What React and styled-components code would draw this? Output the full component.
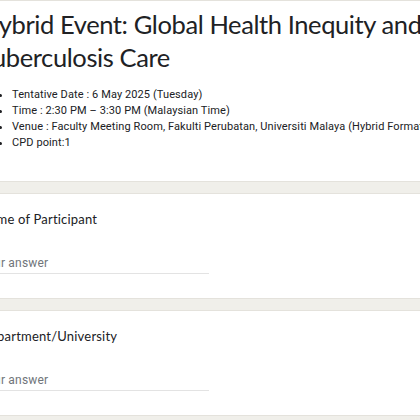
import React from "react";
import styled, { createGlobalStyle } from "styled-components";

const Global = createGlobalStyle`
  html, body {
    margin: 0;
    padding: 0;
    background: #f0efea;
    overflow: hidden;
  }
  body {
    font-family: Roboto, "Liberation Sans", sans-serif;
    color: #202124;
  }
`;

const Page = styled.div`
  display: flex;
  flex-direction: column;
  gap: 11px;
  margin-left: -45px;
  width: 600px;
`;

const Card = styled.section`
  background: #ffffff;
  border: 1px solid #e4e2dc;
  border-radius: 8px;
  padding: ${(p) => p.$pad || "15px 24px 24px"};
`;

const Title = styled.h1`
  margin: 0;
  font-family: Lato, Roboto, sans-serif;
  font-weight: 400;
  font-size: 25.5px;
  line-height: 33px;
  letter-spacing: -0.4px;
  color: #202124;
  width: 470px;
`;

const List = styled.ul`
  margin: 13px 0 0;
  padding-left: 32px;
  font-size: 11px;
  line-height: 16px;
  color: #202124;
  letter-spacing: 0.1px;
`;

const Item = styled.li``;

const Label = styled.div`
  font-family: Lato, Roboto, sans-serif;
  font-size: 13px;
  line-height: 20px;
  color: #202124;
  letter-spacing: 0.2px;
`;

const Answer = styled.div`
  margin-top: 26px;
  width: 229px;
  padding-bottom: 2px;
  border-bottom: 1px solid #e3e3e3;
  font-size: 12px;
  line-height: 16px;
  color: #70757a;
  letter-spacing: 0.2px;
`;

function Question({ label }) {
  return (
    <Card>
      <Label>{label}</Label>
      <Answer>Your answer</Answer>
    </Card>
  );
}

export default function App() {
  return (
    <>
      <Global />
      <Page>
        <Card $pad="7px 24px 30px">
          <Title>Hybrid Event: Global Health Inequity and Tuberculosis Care</Title>
          <List>
            <Item>Tentative Date : 6 May 2025 (Tuesday)</Item>
            <Item>Time : 2:30 PM – 3:30 PM (Malaysian Time)</Item>
            <Item>Venue : Faculty Meeting Room, Fakulti Perubatan, Universiti Malaya (Hybrid Format)</Item>
            <Item>CPD point:1</Item>
          </List>
        </Card>
        <Question label="Name of Participant" />
        <Question label="Department/University" />
        <Question label="Email" />
      </Page>
    </>
  );
}
